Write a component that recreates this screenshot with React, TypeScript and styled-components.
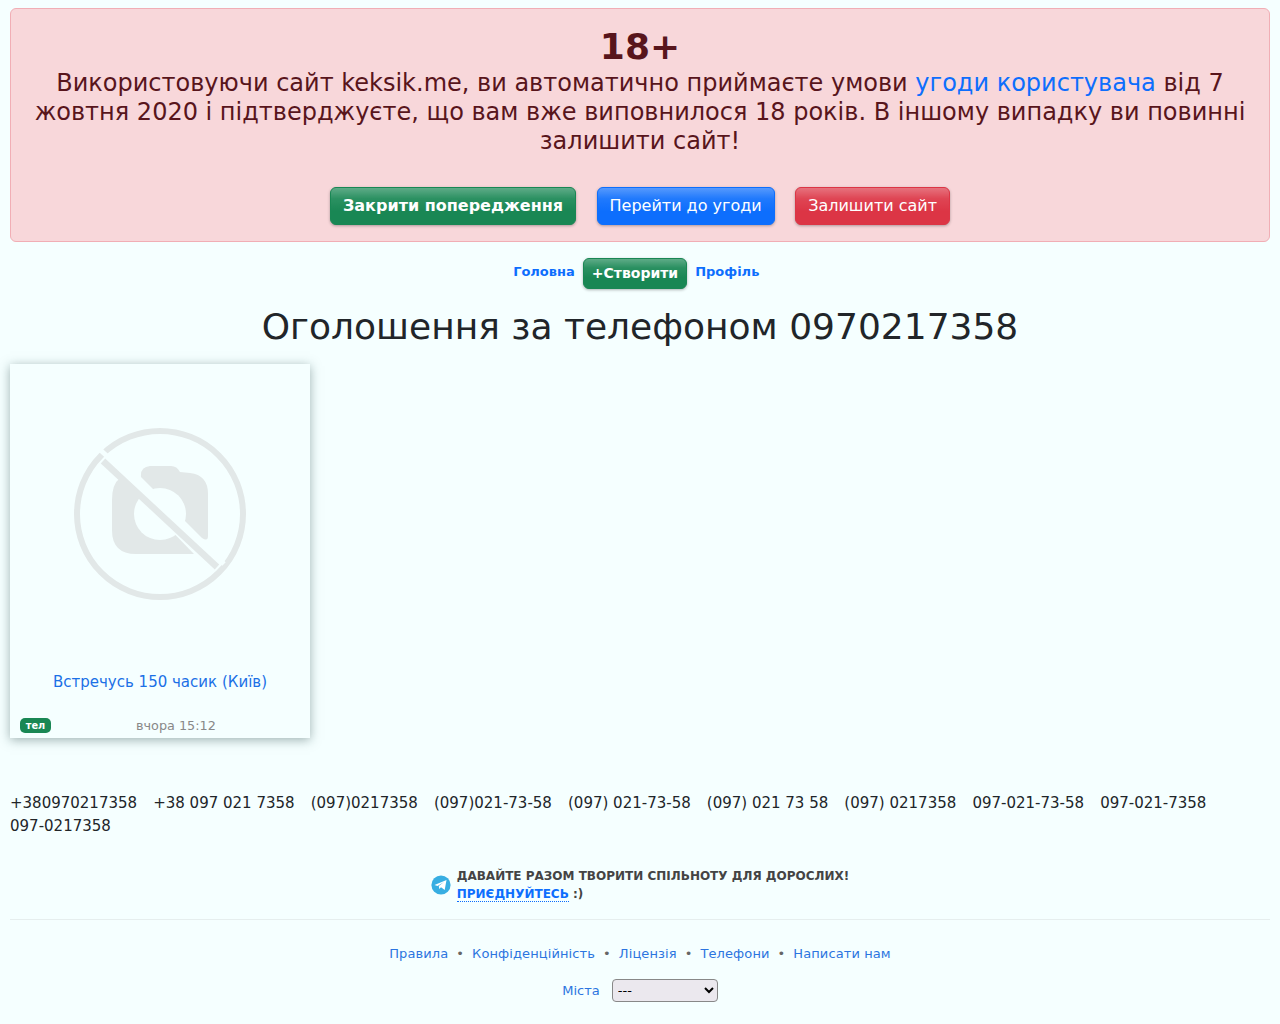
import React from "react";
import styled, { createGlobalStyle } from "styled-components";

const Global = createGlobalStyle`
  html, body { margin: 0; padding: 0; }
  body {
    background: #f5ffff;
    color: #212529;
    font-family: "DejaVu Sans", sans-serif;
    font-size: 16px;
    line-height: 1.5;
  }
  a { color: #0d6efd; text-decoration: none; }
`;

const Page = styled.div`
  padding: 8px 10px 0;
  height: 1016px;
  overflow: hidden;
`;

const Alert = styled.div`
  height: 234px;
  box-sizing: border-box;
  padding: 16px;
  text-align: center;
  background: #f8d7da;
  border: 1px solid #f1aeb5;
  border-radius: 6px;
  color: #58151c;
  font-size: 24px;
  line-height: 29px;
`;

const AlertTitle = styled.div`
  font-size: 36px;
  font-weight: 700;
  line-height: 44px;
`;

const AlertActions = styled.div`
  display: flex;
  justify-content: center;
  gap: 20.5px;
  margin-top: 31px;
`;

const Button = styled.a<{ $tone: "green" | "blue" | "red"; $bold?: boolean }>`
  display: inline-block;
  box-sizing: border-box;
  height: 38px;
  padding: 6px 12px;
  border-radius: 6px;
  color: #fff;
  font-size: 16px;
  line-height: 24px;
  font-weight: ${(p) => (p.$bold ? 700 : 400)};
  background: ${(p) => ({ green: "#198754", blue: "#0d6efd", red: "#dc3545" })[p.$tone]}
    linear-gradient(180deg, rgba(255, 255, 255, 0.3) 0%, rgba(255, 255, 255, 0.08) 30%, rgba(255, 255, 255, 0) 65%);
  border: 1px solid ${(p) => ({ green: "#198754", blue: "#0d6efd", red: "#dc3545" })[p.$tone]};
  box-shadow: 0 1px 3px rgba(0, 0, 0, 0.3);
`;

const Nav = styled.nav`
  display: flex;
  justify-content: center;
  align-items: flex-start;
  gap: 8px;
  margin-top: 16px;
  padding-right: 7.5px;
  height: 31px;
`;

const NavLink = styled.a`
  font-size: 13px;
  font-weight: 700;
  line-height: 20px;
  margin-top: 4px;
`;

const CreateButton = styled(Button)`
  height: 31px;
  padding: 2px 8px;
  font-size: 14px;
  line-height: 24px;
`;

const Title = styled.h1`
  margin: 16px 0 0;
  font-size: 36px;
  font-weight: 400;
  line-height: 43px;
  text-align: center;
`;

const Card = styled.article`
  width: 300px;
  height: 374px;
  margin-top: 16px;
  display: flex;
  flex-direction: column;
  box-shadow: 0 2px 10px rgba(70, 100, 100, 0.5);
`;

const Thumb = styled.div`
  height: 300px;
  display: flex;
  align-items: center;
  justify-content: center;
`;

const CardTitle = styled.a`
  margin-top: 6px;
  color: #1b70e6;
  font-size: 15px;
  line-height: 24px;
  text-align: center;
`;

const CardFooter = styled.div`
  display: flex;
  align-items: center;
  margin-top: 22px;
  padding: 0 10px;
  height: 20px;
`;

const Badge = styled.span`
  width: 31px;
  height: 15px;
  margin-top: -2px;
  border-radius: 5px;
  background: #198754;
  color: #fff;
  font-size: 9.75px;
  font-weight: 700;
  line-height: 15px;
  text-align: center;
`;

const CardDate = styled.span`
  margin-left: 85px;
  color: #888;
  font-size: 12.8px;
  line-height: 20px;
`;

const Phones = styled.div`
  display: flex;
  flex-wrap: wrap;
  column-gap: 16.1px;
  margin-top: 54px;
  font-size: 15px;
  line-height: 23px;
`;

const Telegram = styled.div`
  display: flex;
  align-items: center;
  justify-content: center;
  gap: 6px;
  margin-top: 29px;
  color: #444;
  font-size: 12px;
  font-weight: 700;
  line-height: 18px;
`;

const JoinLink = styled.a`
  border-bottom: 1px dotted #0d6efd;
`;

const Rule = styled.hr`
  margin: 16px 0 0;
  border: 0;
  border-top: 1px solid #e6eeee;
`;

const FooterLinks = styled.div`
  display: flex;
  justify-content: center;
  align-items: center;
  gap: 8px;
  margin-top: 24px;
  font-size: 13px;
  line-height: 20px;
  letter-spacing: 0.1px;
  color: #666;
`;

const FooterLink = styled.a`
  color: #2c75e0;
`;

const CityRow = styled.div`
  display: flex;
  justify-content: center;
  align-items: center;
  gap: 12px;
  margin-top: 15px;
  font-size: 13px;
`;

const CitySelect = styled.select`
  width: 106px;
  height: 23px;
  font-family: "DejaVu Sans", sans-serif;
  font-size: 13px;
  padding: 0 1px;
  background-color: #ebe8ee;
  border: 1px solid #888;
  border-radius: 4px;
`;

const PhotoIcon = styled.svg`
  filter: blur(0.6px);
`;

const NoPhoto = () => (
  <PhotoIcon width="172" height="172" viewBox="0 0 172 172" fill="none">
    <circle cx="86" cy="86" r="83" stroke="#e2e8e8" strokeWidth="6" />
    <path
      d="M38 72 Q38 56 46 50 L120 126 L62 126 Q38 126 38 102 Z"
      fill="#e2e8e8"
    />
    <path
      d="M67 49 Q66 39 76 38 L97 38 Q103 38 106 44 L116 45 Q134 47 134 66 L134 108 Q134 114 128 110 Z"
      fill="#e2e8e8"
    />
    <circle cx="86" cy="86" r="26" fill="#f5ffff" />
    <path d="M22 18 L150 136" stroke="#f5ffff" strokeWidth="5" />
    <path d="M29 33 L143 139" stroke="#e2e8e8" strokeWidth="6.5" />
  </PhotoIcon>
);

const TelegramIcon = () => (
  <svg width="20" height="20" viewBox="0 0 20 20">
    <circle cx="10" cy="10" r="9.6" fill="#37aee2" />
    <path d="M3.5 10 L15.5 5 L13.7 15 L10 12.3 L8.3 14 L7.8 11 L13 7 L6.5 10.9 Z" fill="#fff" />
  </svg>
);

const phones = [
  "+380970217358", "+38 097 021 7358", "(097)0217358", "(097)021-73-58", "(097) 021-73-58",
  "(097) 021 73 58", "(097) 0217358", "097-021-73-58", "097-021-7358", "097-0217358",
];

const footerLinks = ["Правила", "Конфіденційність", "Ліцензія", "Телефони", "Написати нам"];

export default function App() {
  return (
    <Page>
      <Global />
      <Alert>
        <AlertTitle>18+</AlertTitle>
        Використовуючи сайт keksik.me, ви автоматично приймаєте умови <a href="#">угоди користувача</a> від 7 жовтня 2020 і підтверджуєте, що вам вже виповнилося 18 років. В іншому випадку ви повинні залишити сайт!
        <AlertActions>
          <Button $tone="green" $bold>Закрити попередження</Button>
          <Button $tone="blue">Перейти до угоди</Button>
          <Button $tone="red">Залишити сайт</Button>
        </AlertActions>
      </Alert>
      <Nav>
        <NavLink href="#">Головна</NavLink>
        <CreateButton $tone="green" $bold>+Створити</CreateButton>
        <NavLink href="#">Профіль</NavLink>
      </Nav>
      <Title>Оголошення за телефоном 0970217358</Title>
      <Card>
        <Thumb><NoPhoto /></Thumb>
        <CardTitle href="#">Встречусь 150 часик (Київ)</CardTitle>
        <CardFooter>
          <Badge>тел</Badge>
          <CardDate>вчора 15:12</CardDate>
        </CardFooter>
      </Card>
      <Phones>
        {phones.map((p) => <span key={p}>{p}</span>)}
      </Phones>
      <Telegram>
        <TelegramIcon />
        <div>
          ДАВАЙТЕ РАЗОМ ТВОРИТИ СПІЛЬНОТУ ДЛЯ ДОРОСЛИХ!<br />
          <JoinLink href="#">ПРИЄДНУЙТЕСЬ</JoinLink> :)
        </div>
      </Telegram>
      <Rule />
      <FooterLinks>
        {footerLinks.map((l, i) => (
          <React.Fragment key={l}>
            {i > 0 && <span>•</span>}
            <FooterLink href="#">{l}</FooterLink>
          </React.Fragment>
        ))}
      </FooterLinks>
      <CityRow>
        <FooterLink href="#">Міста</FooterLink>
        <CitySelect defaultValue="---"><option>---</option></CitySelect>
      </CityRow>
    </Page>
  );
}
